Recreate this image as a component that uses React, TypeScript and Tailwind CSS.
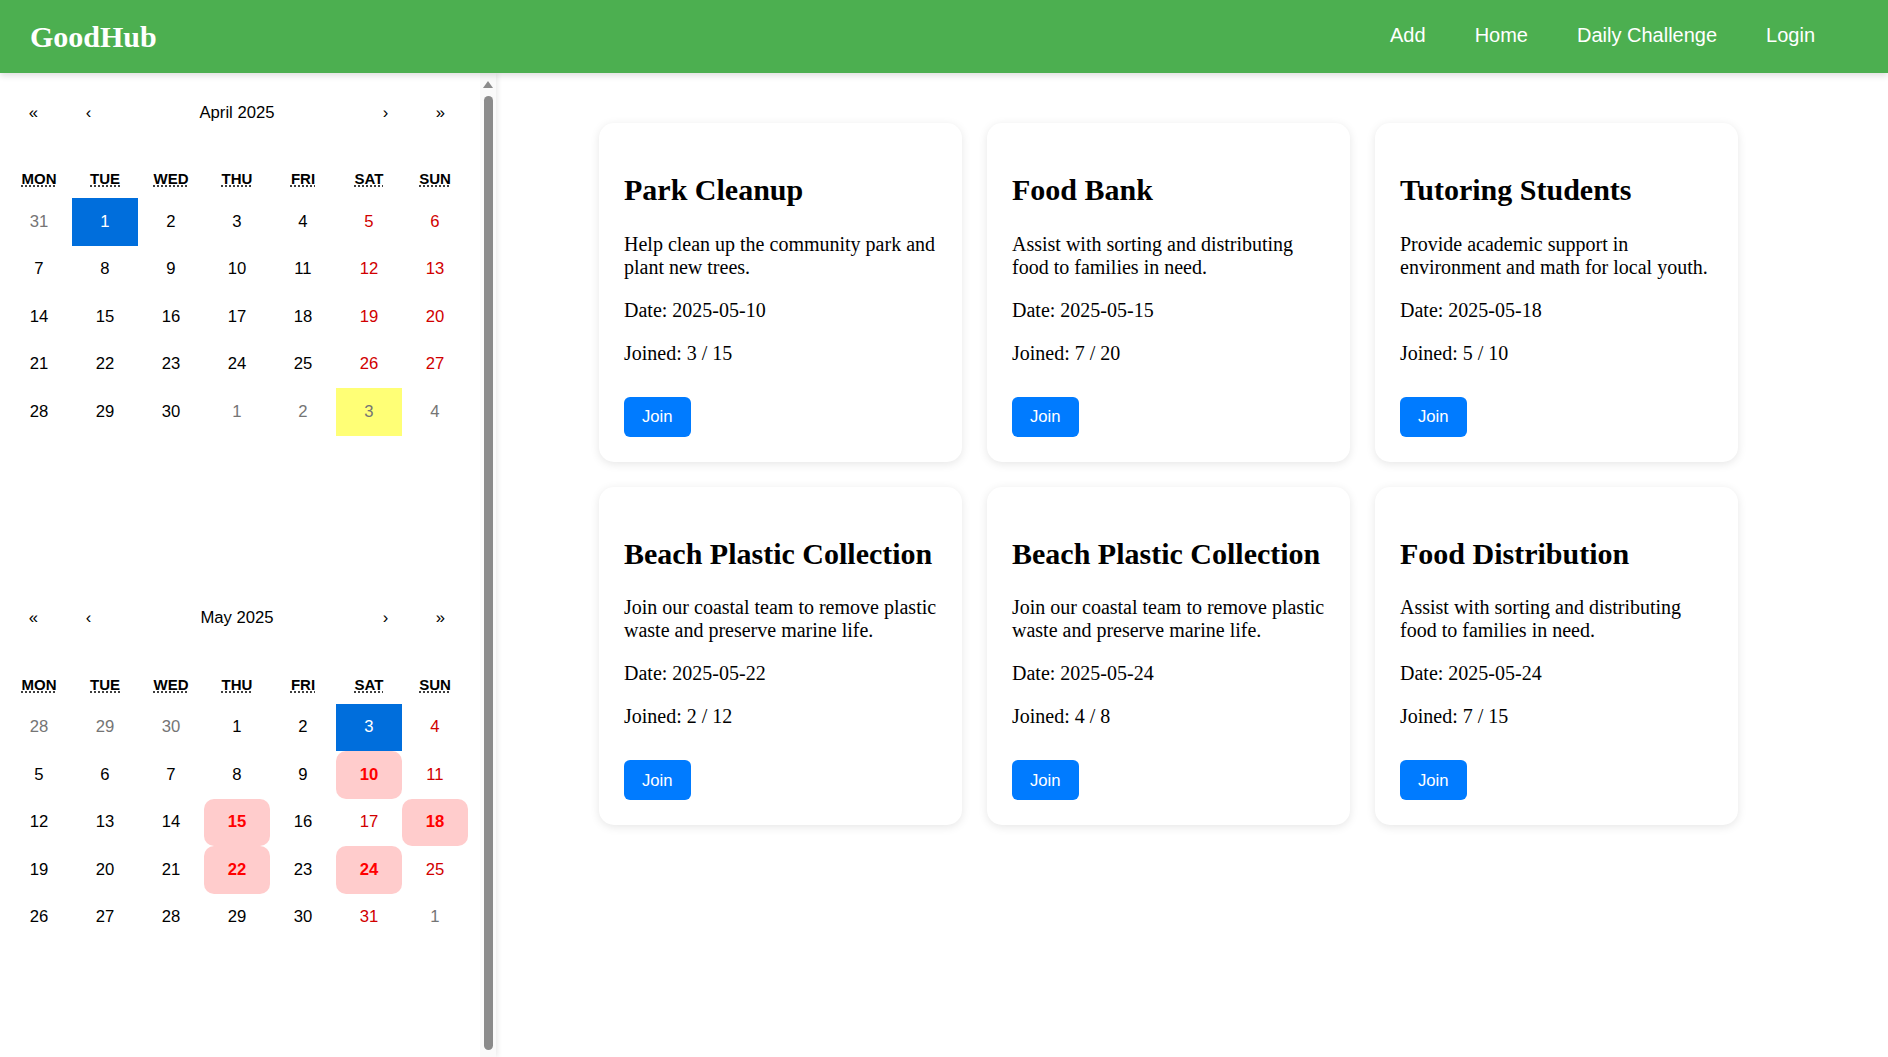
import React from 'react';

type Tile = {
  key: string;
  day: number;
  current: boolean;
  weekend: boolean;
};

type Opportunity = {
  id: number;
  title: string;
  description: string;
  date: string;
  joined: number;
  capacity: number;
};

const opportunities: Opportunity[] = [
  { id: 1, title: 'Park Cleanup', description: 'Help clean up the community park and plant new trees.', date: '2025-05-10', joined: 3, capacity: 15 },
  { id: 2, title: 'Food Bank', description: 'Assist with sorting and distributing food to families in need.', date: '2025-05-15', joined: 7, capacity: 20 },
  { id: 3, title: 'Tutoring Students', description: 'Provide academic support in environment and math for local youth.', date: '2025-05-18', joined: 5, capacity: 10 },
  { id: 4, title: 'Beach Plastic Collection', description: 'Join our coastal team to remove plastic waste and preserve marine life.', date: '2025-05-22', joined: 2, capacity: 12 },
  { id: 5, title: 'Beach Plastic Collection', description: 'Join our coastal team to remove plastic waste and preserve marine life.', date: '2025-05-24', joined: 4, capacity: 8 },
  { id: 6, title: 'Food Distribution', description: 'Assist with sorting and distributing food to families in need.', date: '2025-05-24', joined: 7, capacity: 15 },
];

const WEEKDAYS = [
  { short: 'Mon', long: 'Monday' },
  { short: 'Tue', long: 'Tuesday' },
  { short: 'Wed', long: 'Wednesday' },
  { short: 'Thu', long: 'Thursday' },
  { short: 'Fri', long: 'Friday' },
  { short: 'Sat', long: 'Saturday' },
  { short: 'Sun', long: 'Sunday' },
];

const MONTHS = ['January', 'February', 'March', 'April', 'May', 'June', 'July', 'August', 'September', 'October', 'November', 'December'];

const fmt = (d: Date) => `${d.getFullYear()}-${String(d.getMonth() + 1).padStart(2, '0')}-${String(d.getDate()).padStart(2, '0')}`;

// Monday-first grid of the month, padded with neighbouring days
function buildMonth(year: number, month: number): Tile[] {
  const first = new Date(year, month, 1);
  const last = new Date(year, month + 1, 0);
  const start = new Date(first);
  start.setDate(first.getDate() - ((first.getDay() + 6) % 7));
  const end = new Date(last);
  end.setDate(last.getDate() + ((7 - last.getDay()) % 7));

  const tiles: Tile[] = [];
  for (let d = new Date(start); d <= end; d.setDate(d.getDate() + 1)) {
    const dow = (d.getDay() + 6) % 7;
    tiles.push({
      key: fmt(d),
      day: d.getDate(),
      current: d.getMonth() === month,
      weekend: dow >= 5,
    });
  }
  return tiles;
}

const eventDates = new Set(opportunities.map((o) => o.date));
const today = '2025-05-03';

function MonthCalendar({ year, month, value }: { year: number; month: number; value: string }) {
  const tiles = buildMonth(year, month);

  return (
    <div className="w-[462px] font-['Liberation_Sans',Arial,sans-serif] leading-[22.5px] text-black">
      {/* Navigation */}
      <div className="flex h-[55px] mb-[20px] text-[16.67px]">
        <button className="min-w-[55px]">«</button>
        <button className="min-w-[55px]">‹</button>
        <button className="flex-grow">
          {MONTHS[month]} {year}
        </button>
        <button className="min-w-[55px]">›</button>
        <button className="min-w-[55px]">»</button>
      </div>

      {/* Weekdays */}
      <div className="grid grid-cols-7 text-center uppercase font-bold text-[15px]">
        {WEEKDAYS.map((w) => (
          <div key={w.short} className="p-[7.5px]">
            <abbr title={w.long} className="underline decoration-dotted underline-offset-[2px]">
              {w.short}
            </abbr>
          </div>
        ))}
      </div>

      {/* Days */}
      <div className="grid grid-cols-7 text-center text-[16.67px]">
        {tiles.map((t) => {
          const active = t.key === value;
          const isEvent = t.current && eventDates.has(t.key);
          const isNow = t.key === today;

          let cls = 'text-black';
          if (!t.current) cls = 'text-[#757575]';
          else if (t.weekend) cls = 'text-[#d10000]';

          if (active) cls = 'bg-[#006edc] text-white';
          else if (isEvent) cls = 'bg-[#ffcccc] rounded-[10px] font-bold text-[#ff0000]';
          else if (isNow) cls += ' bg-[#ffff76]';

          return (
            <button key={t.key} className={`h-[47.5px] py-[12.5px] px-[8.33px] ${cls}`}>
              {t.day}
            </button>
          );
        })}
      </div>
    </div>
  );
}

function OpportunityCard({ item }: { item: Opportunity }) {
  return (
    <div className="bg-white rounded-[15px] p-[25px] shadow-[0_2px_10px_rgba(0,0,0,0.1)] font-['Liberation_Serif','Times_New_Roman',serif] text-black">
      <h2 className="text-[30px] font-bold leading-[34.5px] my-[25px]">{item.title}</h2>
      <p className="text-[20px] leading-[23px] my-[20px]">{item.description}</p>
      <p className="text-[20px] leading-[23px] my-[20px]">Date: {item.date}</p>
      <p className="text-[20px] leading-[23px] my-[20px]">
        Joined: {item.joined} / {item.capacity}
      </p>
      <button className="block mt-[32px] h-[40px] px-[18px] rounded-[6px] bg-[#007bff] text-white text-[16.67px] font-['Liberation_Sans',Arial,sans-serif]">
        Join
      </button>
    </div>
  );
}

export default function App() {
  return (
    <div className="h-[1057px] overflow-hidden flex flex-col bg-white">
      {/* Header */}
      <header className="relative z-10 h-[73px] shrink-0 bg-[#4caf50] flex items-center justify-between pl-[30px] pr-[73px] shadow-[0_3px_6px_rgba(0,0,0,0.12)]">
        <div className="text-white text-[30px] font-bold font-['Liberation_Serif','Times_New_Roman',serif] pb-[1px]">
          GoodHub
        </div>
        <nav className="flex gap-[49px] text-white text-[20px] font-['Liberation_Sans',Arial,sans-serif] pb-[3px]">
          <a href="#">Add</a>
          <a href="#">Home</a>
          <a href="#">Daily Challenge</a>
          <a href="#">Login</a>
        </nav>
      </header>

      <div className="flex flex-1 min-h-0">
        {/* Sidebar */}
        <aside className="w-[496px] shrink-0 flex bg-white shadow-[2px_0_5px_rgba(0,0,0,0.08)]">
          <div className="w-[480px] overflow-hidden pl-[6px] pt-[12.5px]">
            <MonthCalendar year={2025} month={3} value="2025-04-01" />
            <div className="mt-[155.5px]">
              <MonthCalendar year={2025} month={4} value="2025-05-03" />
            </div>
          </div>
          {/* scrollbar */}
          <div className="w-[16px] bg-[#fafafa] flex flex-col items-center pt-[8px]">
            <svg width="10" height="7" viewBox="0 0 10 7">
              <polygon points="5,0 10,7 0,7" fill="#8b8b8b" />
            </svg>
            <div className="mt-[8px] w-[9px] h-[954px] rounded-full bg-[#8b8b8b]" />
          </div>
        </aside>

        {/* Main */}
        <main className="flex-1 pt-[50px] pl-[103px]">
          <div className="grid grid-cols-[repeat(3,363px)] gap-x-[25px] gap-y-[25px]">
            {opportunities.map((o) => (
              <OpportunityCard key={o.id} item={o} />
            ))}
          </div>
        </main>
      </div>
    </div>
  );
}
